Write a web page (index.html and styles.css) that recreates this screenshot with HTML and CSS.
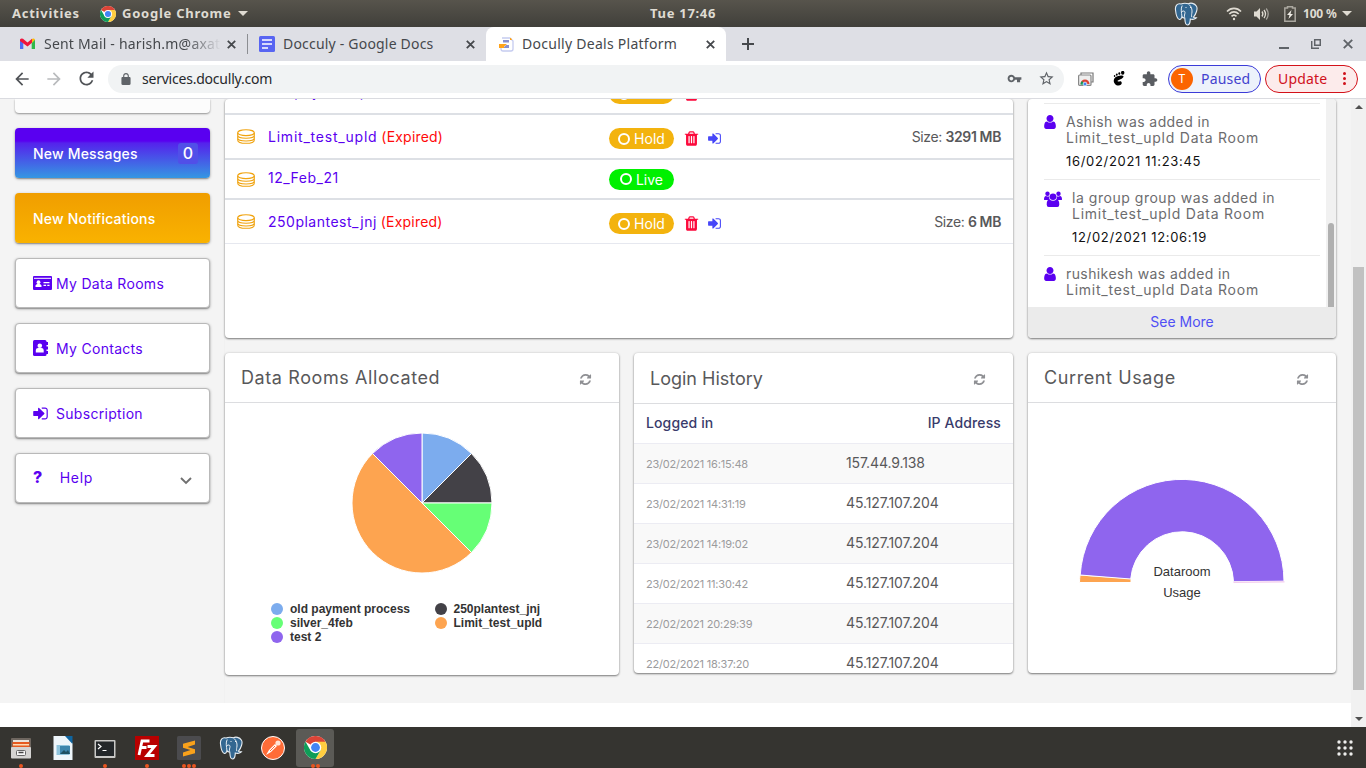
FILE: index.html
```html
<!DOCTYPE html>
<html lang="en">
<head>
<meta charset="utf-8">
<title>Docully Deals Platform</title>
<link rel="stylesheet" href="styles.css">
</head>
<body>
<svg class="defs" width="0" height="0" aria-hidden="true">
  <symbol id="chrome" viewBox="0 0 24 24">
    <circle cx="12" cy="12" r="12" fill="#fff"/>
    <path d="M12 12 1.600 6A12 12 0 0 1 22.400 6z" fill="#db4437"/>
    <path d="M22.400 6A12 12 0 0 1 12 24l5.200-9L12 6z" fill="#ffcd40"/>
    <path d="M1.600 6A12 12 0 0 0 12 24l5.200-9-5.200-3-5.200 3z" fill="#0f9d58"/>
    <circle cx="12" cy="12" r="6" fill="#fff"/>
    <circle cx="12" cy="12" r="4.600" fill="#4285f4"/>
  </symbol>
  <symbol id="elephant" viewBox="0 0 24 24">
    <path d="M7 2C3 1 1 4 1.500 8c.4 4 2 9 4 9.500 1.200.3 2-1.500 2.500-2.500 1 1 2.500 1 2.800 1.200.2 2 0 6.800 2.700 6.800 2.800 0 2.500-3 2.800-6 2 .8 5.200.4 6.200-1.200-1 0-2.500.2-3-.6 2.500-3 4.500-8.500 3-11C20.500 1 16.500.6 14.500 1.800 12 1 9 1.200 7 2z" fill="#336791" stroke="#e8eef3" stroke-width="1.100"/>
    <path d="M8.200 3.500C6.500 7 7.500 10 8 15M15 2.500c2.500 2 3.200 5 3 7.500-.2 2-.8 3-.2 5.200M8 9.500c1.500-1 3-.5 3 1 0 2-1.200 3-.3 5.200M11.500 5.500h1M16 5.500h1" fill="none" stroke="#e8eef3" stroke-width="1"/>
  </symbol>
  <symbol id="trash" viewBox="0 0 1792 1792"><path d="M704 1376v-704q0-14-9-23t-23-9h-64q-14 0-23 9t-9 23v704q0 14 9 23t23 9h64q14 0 23-9t9-23zm256 0v-704q0-14-9-23t-23-9h-64q-14 0-23 9t-9 23v704q0 14 9 23t23 9h64q14 0 23-9t9-23zm256 0v-704q0-14-9-23t-23-9h-64q-14 0-23 9t-9 23v704q0 14 9 23t23 9h64q14 0 23-9t9-23zm-544-992h448l-48-117q-7-9-17-11h-317q-10 2-17 11zm928 32v64q0 14-9 23t-23 9h-96v948q0 83-47 143.500t-113 60.500h-832q-66 0-113-58.500t-47-141.500v-952h-96q-14 0-23-9t-9-23v-64q0-14 9-23t23-9h309l70-167q15-37 54-63t79-26h320q40 0 79 26t54 63l70 167h309q14 0 23 9t9 23z"/></symbol>
  <symbol id="signin" viewBox="0 0 1792 1792"><path d="M1312 896q0 26-19 45l-544 544q-19 19-45 19t-45-19-19-45v-288h-448q-26 0-45-19t-19-45v-384q0-26 19-45t45-19h448v-288q0-26 19-45t45-19 45 19l544 544q19 19 19 45zm352-352v704q0 119-84.500 203.500t-203.500 84.500h-320q-13 0-22.500-9.500t-9.500-22.500q0-4-1-20t-.5-26.500 3-23.500 10-19.500 20.500-6.500h320q66 0 113-47t47-113v-704q0-66-47-113t-113-47h-312l-11.500-1-11.500-3-8-5.500-7-9-2-13.500q0-4-1-20t-.5-26.500 3-23.500 10-19.500 20.500-6.500h320q119 0 203.500 84.500t84.500 203.500z"/></symbol>
  <symbol id="refresh" viewBox="0 0 1792 1792"><path d="M1639 1056q0 5-1 7-64 268-268 434.500t-478 166.500q-146 0-282.500-55t-243.500-157l-129 129q-19 19-45 19t-45-19-19-45v-448q0-26 19-45t45-19h448q26 0 45 19t19 45-19 45l-137 137q71 66 161 102t187 36q134 0 250-65t186-179q11-17 53-117 8-23 30-23h192q13 0 22.500 9.500t9.500 22.500zm25-800v448q0 26-19 45t-45 19h-448q-26 0-45-19t-19-45 19-45l138-138q-148-137-349-137-134 0-250 65t-186 179q-11 17-53 117-8 23-30 23h-199q-13 0-22.500-9.500t-9.500-22.500v-7q65-268 270-434.500t480-166.500q146 0 284 55.500t245 156.500l130-129q19-19 45-19t45 19 19 45z"/></symbol>
  <symbol id="user" viewBox="256 128 1280 1536"><path d="M1536 1399q0 109-62.500 187t-150.500 78h-854q-88 0-150.500-78t-62.500-187q0-85 8.500-160.500t31.500-152 58.500-131 94-89 134.500-34.500q131 128 313 128t313-128q76 0 134.500 34.500t94 89 58.500 131 31.500 152 8.500 160.500zm-256-887q0 159-112.500 271.500t-271.500 112.500-271.500-112.500-112.500-271.500 112.500-271.500 271.500-112.500 271.500 112.500 112.500 271.500z"/></symbol>
  <symbol id="coins" viewBox="0 0 18 15">
    <g fill="none" stroke="#f0a30f" stroke-width="1.100"><ellipse cx="9" cy="3.700" rx="8.300" ry="2.900"/><path d="M.7 3.700v7.200C.7 15.400 17.300 15.400 17.300 10.900V3.700M.7 6.200C.7 10.200 17.300 10.200 17.300 6.200M.7 9C.7 13 17.300 13 17.300 9"/></g>
  </symbol>
</svg>

<header class="topbar">
  <span class="act">Activities</span>
  <svg class="tb-chrome" width="16" height="16"><use href="#chrome"/></svg>
  <span class="app">Google Chrome</span>
  <i class="tri"></i>
  <span class="clock">Tue 17:46</span>
  <div class="tray">
    <svg width="24" height="24"><use href="#elephant"/></svg>
    <svg class="wifi" width="16" height="14" viewBox="0 0 16 14" fill="none" stroke="#dfdbd2" stroke-width="1.700"><path d="M1 4.500C5 .3 11 .3 15 4.500M3.300 7c2.700-2.800 6.700-2.800 9.400 0M5.500 9.400c1.500-1.500 3.500-1.500 5 0"/><circle cx="8" cy="12" r="1.200" fill="#dfdbd2" stroke="none"/></svg>
    <svg class="vol" width="17" height="14" viewBox="0 0 17 14" fill="none" stroke="#dfdbd2" stroke-width="1.300"><path d="M1 4.500h2.500L7 1v12L3.500 9.500H1z" fill="#dfdbd2" stroke="none"/><path d="M9 4.500q1.800 2.500 0 5M11 3q3 4 0 8"/><path d="M13.200 1.500q4 5.500 0 11" stroke="#a5a29b"/></svg>
    <svg class="bat" width="12" height="16" viewBox="0 0 12 16"><path d="M3.500 2V.8h5V2h2.700v13.200H.8V2z" fill="none" stroke="#aaa79f" stroke-width="1.500"/><path d="M7.500 4 3 9h2.500l-1 4L9 8H6.500z" fill="#f0ede6"/></svg>
    <span class="pct">100 %</span>
    <i class="tri"></i>
  </div>
</header>

<nav class="tabs">
  <div class="tab mail">
    <svg width="15" height="12" viewBox="0 0 15 12"><path d="M0 1.500V11h3.300V5z" fill="#4f6bf5"/><path d="M15 1.500V11h-3.300V5z" fill="#2fb84b"/><path d="M15 1.500 11.700 5V1Q14 0 15 1.500z" fill="#fbbc04"/><path d="M0 1.500Q1 0 3 .7L7.500 4.500 12 .7V4.800L7.500 8.500 0 3z" fill="#f0143c"/></svg>
    <span class="t fade">Sent Mail - harish.m@axat</span>
    <svg class="x" width="9" height="9" viewBox="0 0 9 9"><path d="m.8.8 7.400 7.400m0-7.400L.8 8.200"/></svg>
  </div>
  <div class="tab docs">
    <svg width="16" height="16" viewBox="0 0 16 16"><rect width="16" height="16" rx="1.500" fill="#5865f2"/><path d="M3 4h10M3 8h10M3 12h6" stroke="#fff" stroke-width="1.700"/></svg>
    <span class="t">Docculy - Google Docs</span>
    <svg class="x" width="9" height="9" viewBox="0 0 9 9"><path d="m.8.8 7.400 7.400m0-7.400L.8 8.200"/></svg>
  </div>
  <div class="tab active">
    <svg width="15" height="15" viewBox="0 0 15 15"><path d="M3 1h8l3 3v8q0 2-2 2H4q-2 0-2-2V8" fill="#fff" stroke="#c5cbf0" stroke-width="1.300"/><path d="M4 3h6v2.500H4zM7 8h3v3H4z" fill="#8890cf"/><path d="M0 7h8l-3 2.500V11H0zM11 1h1l1 2h-2z" fill="#ffa31a"/></svg>
    <span class="t">Docully Deals Platform</span>
    <svg class="x" width="9" height="9" viewBox="0 0 9 9"><path d="m.8.8 7.400 7.400m0-7.400L.8 8.200"/></svg>
  </div>
  <svg class="plus" width="12" height="12" viewBox="0 0 12 12"><path d="M6 0v12M0 6h12" stroke="#45484c" stroke-width="2"/></svg>
  <div class="wctl">
    <svg width="10" height="10" viewBox="0 0 10 10"><path d="M0 9h10" stroke="#5f6368" stroke-width="2"/></svg>
    <svg width="10" height="10" viewBox="0 0 10 10" fill="none" stroke="#5f6368" stroke-width="1.500"><path d="M3.700.7h5.600v5.600H3.700zM.7 2v7.300H8"/></svg>
    <svg width="10" height="10" viewBox="0 0 10 10"><path d="m.8.8 8.400 8.400m0-8.400L.8 9.200" stroke="#5f6368" stroke-width="1.900"/></svg>
  </div>
</nav>

<div class="toolbar">
  <svg class="nav" width="20" height="20" viewBox="0 0 24 24" fill="#505357"><path d="M20 11H7.800l5.600-5.600L12 4l-8 8 8 8 1.400-1.400L7.800 13H20z"/></svg>
  <svg class="nav" width="20" height="20" viewBox="0 0 24 24" fill="#b9bbbd"><path d="M4 11h12.200l-5.600-5.600L12 4l8 8-8 8-1.400-1.400 5.600-5.600H4z"/></svg>
  <svg class="nav" width="21" height="21" viewBox="0 0 24 24" fill="#505357"><path d="M17.650 6.350C16.200 4.900 14.210 4 12 4c-4.420 0-7.990 3.580-7.990 8s3.570 8 7.990 8c3.730 0 6.840-2.550 7.730-6h-2.080c-.82 2.330-3.040 4-5.650 4-3.310 0-6-2.690-6-6s2.690-6 6-6c1.660 0 3.140.69 4.220 1.780L13 11h7V4l-2.350 2.350z"/></svg>
  <div class="omni">
    <svg width="12" height="12" viewBox="4 1 16 21" fill="#5f6368"><path fill-rule="evenodd" d="M18 8h-1V6c0-2.760-2.240-5-5-5S7 3.240 7 6v2H6c-1.100 0-2 .9-2 2v10c0 1.100.9 2 2 2h12c1.100 0 2-.9 2-2V10c0-1.100-.9-2-2-2zM9 6a3 3 0 0 1 6 0v2H9z"/></svg>
    <span class="url">services.docully.com</span>
    <svg class="key" width="15" height="15" viewBox="0 0 24 24" fill="#5f6368"><path d="M12.650 10C11.830 7.670 9.610 6 7 6c-3.310 0-6 2.690-6 6s2.690 6 6 6c2.610 0 4.830-1.670 5.650-4H16v4h5v-4h2v-4H12.650zM7 15c-1.700 0-3-1.300-3-3s1.300-3 3-3 3 1.300 3 3-1.300 3-3 3z"/></svg>
    <svg class="star" width="17" height="17" viewBox="0 0 24 24" fill="#5f6368"><path d="M22 9.240l-7.190-.62L12 2 9.190 8.630 2 9.240l5.460 4.730L5.820 21 12 17.270 18.180 21l-1.630-7.030L22 9.240zM12 15.400l-3.760 2.270 1-4.280-3.320-2.880 4.380-.38L12 6.100l1.710 4.040 4.380.38-3.320 2.880 1 4.280L12 15.400z"/></svg>
  </div>
  <svg class="ext1" width="16" height="14" viewBox="0 0 16 14"><path d="M3 3V1h12v9h-2" fill="none" stroke="#777" stroke-width="1.200"/><rect x=".6" y="3" width="12.400" height="10.400" rx="1" fill="#eee" stroke="#888" stroke-width="1.200"/><path d="M2.500 12a4.500 4.500 0 0 1 9 0L7 12z" fill="#db4437"/><path d="M2.500 12.500A4.500 4.500 0 0 1 4 9l3 4z" fill="#0f9d58"/><circle cx="7" cy="12" r="1.900" fill="#4285f4" stroke="#fff" stroke-width=".7"/></svg>
  <svg class="ext2" width="12" height="15" viewBox="0 0 12 15"><path d="M10.500 5.300C10 3.800 3.500 4.300 1.500 7.200c-2 3 .2 7.300 4 7.300 2.700 0 4.200-2.500 2.600-4-1.200-1-2.400.6-3.400-.2C3.500 9 10.800 8 10.500 5.300z"/><ellipse cx="9.700" cy="1.800" rx="1.700" ry="2"/><ellipse cx="6.300" cy="2.500" rx="1" ry="1.300"/><ellipse cx="3.800" cy="3.600" rx=".9" ry="1.200"/><ellipse cx="1.600" cy="5" rx=".8" ry="1"/></svg>
  <svg class="ext3" width="16" height="16" viewBox="1 1 23 22" fill="#5a5d62"><path d="M20.500 11H19V7c0-1.100-.9-2-2-2h-4V3.500C13 2.120 11.880 1 10.500 1S8 2.120 8 3.500V5H4c-1.100 0-1.990.9-1.990 2v3.800H3.500c1.490 0 2.700 1.210 2.700 2.700s-1.210 2.700-2.700 2.700H2V20c0 1.100.9 2 2 2h3.800v-1.500c0-1.490 1.210-2.700 2.700-2.700 1.490 0 2.700 1.210 2.700 2.700V22H17c1.100 0 2-.9 2-2v-4h1.500c1.380 0 2.500-1.120 2.500-2.500S21.880 11 20.500 11z"/></svg>
  <div class="paused"><b>T</b><span>Paused</span></div>
  <div class="update"><span>Update</span><svg width="3" height="13" viewBox="0 0 3 13" fill="#d0111b"><circle cx="1.500" cy="1.500" r="1.500"/><circle cx="1.500" cy="6.500" r="1.500"/><circle cx="1.500" cy="11.500" r="1.500"/></svg></div>
</div>

<div class="view">
  <div class="page">
    <aside class="side">
      <div class="profile"></div>
      <div class="btn msg"><span>New Messages</span><em>0</em></div>
      <div class="btn notif"><span>New Notifications</span></div>
      <div class="btn link"><svg width="19" height="14" viewBox="0 0 19 14"><path d="M1 0h17q1 0 1 1v12q0 1-1 1H1q-1 0-1-1V1q0-1 1-1z" fill="#5a00f0"/><path d="M1 2.300h17" stroke="#fff" stroke-width="1"/><path d="M2.500 11V9.500Q3 8 4.500 8h2Q8 8 8.500 9.500V11zM10.500 6h6v1.200h-6zM10.500 8.700h2.600v1.200h-2.600zm3.800 0h2.200v1.200h-2.200z" fill="#fff"/><circle cx="5.500" cy="6.200" r="1.900" fill="#fff"/></svg><span>My Data Rooms</span></div>
      <div class="btn link"><svg width="15" height="16" viewBox="0 0 15 16"><rect width="13.500" height="16" rx="1.500" fill="#5a00f0"/><path d="M13 2h2v3h-2zm0 4.500h2v3h-2zM13 11h2v3h-2z" fill="#5a00f0"/><path d="M2.800 12.500V10Q3 8 5 8h3.500q2 0 2.200 2v2.500z" fill="#fff"/><circle cx="6.800" cy="5.700" r="2.300" fill="#fff"/></svg><span>My Contacts</span></div>
      <div class="btn link"><svg class="sub" width="17" height="17" fill="#5a00f0"><use href="#signin"/></svg><span>Subscription</span></div>
      <div class="btn link help"><strong>?</strong><span>Help</span><svg width="12" height="8" viewBox="0 0 12 8"><path d="m1 1 5 5 5-5" fill="none" stroke="#707070" stroke-width="1.900"/></svg></div>
    </aside>
    <main class="main">
      <section class="card rooms">
        <div class="row first">
          <svg width="18" height="15"><use href="#coins"/></svg>
          <div class="name"><span>old payment process</span></div>
          <div class="pill hold"><i></i><span>Hold</span></div>
          <svg class="tr" width="17" height="17"><use href="#trash"/></svg><svg class="si" width="15" height="15"><use href="#signin"/></svg>
        </div>
        <div class="row">
          <svg width="18" height="15"><use href="#coins"/></svg>
          <div class="name"><span class="wide">Limit_test_upld</span> <span class="exp">(Expired)</span></div>
          <div class="pill hold"><i></i><span>Hold</span></div>
          <svg class="tr" width="17" height="17"><use href="#trash"/></svg><svg class="si" width="15" height="15"><use href="#signin"/></svg>
          <div class="size">Size: <b>3291 MB</b></div>
        </div>
        <div class="row live-row">
          <svg width="18" height="15"><use href="#coins"/></svg>
          <div class="name"><span>12_Feb_21</span></div>
          <div class="pill live"><i></i><span>Live</span></div>
        </div>
        <div class="row last">
          <svg width="18" height="15"><use href="#coins"/></svg>
          <div class="name"><span>250plantest_jnj</span> <span class="exp">(Expired)</span></div>
          <div class="pill hold"><i></i><span>Hold</span></div>
          <svg class="tr" width="17" height="17"><use href="#trash"/></svg><svg class="si" width="15" height="15"><use href="#signin"/></svg>
          <div class="size">Size: <b>6 MB</b></div>
        </div>
      </section>

      <section class="card activity">
        <div class="feed">
          <div class="items">
            <article><svg width="12" height="14" fill="#5a00f0"><use href="#user"/></svg><div><p><span>Ashish was added in</span><br><span class="wide">Limit_test_upld Data Room</span></p><time>16/02/2021 11:23:45</time></div></article>
            <article><svg width="18" height="16" viewBox="0 0 18 16" fill="#5a00f0"><circle cx="3.500" cy="2.700" r="2.200"/><circle cx="14.500" cy="2.700" r="2.200"/><path d="M0 8.500Q0 5 2 5q2 1 3.500.3-.6 2 .3 3.700H1Q0 9 0 8.500zM18 8.500Q18 5 16 5q-2 1-3.500.3.6 2-.3 3.700H17q1 0 1-.5z"/><circle cx="9" cy="5.700" r="3.300"/><path d="M2.700 13.500Q2.700 8.500 5.500 8.500q3.500 2.500 7 0 2.800 0 2.800 5 0 2.500-2 2.500H4.700q-2 0-2-2.500z"/></svg><div><p><span class="grp">la group group was added in</span><br><span class="wide">Limit_test_upld Data Room</span></p><time>12/02/2021 12:06:19</time></div></article>
            <article><svg width="12" height="14" fill="#5a00f0"><use href="#user"/></svg><div><p><span>rushikesh was added in</span><br><span class="wide">Limit_test_upld Data Room</span></p><time>12/02/2021 12:05:36</time></div></article>
          </div>
          <div class="feedbar"><i></i></div>
        </div>
        <div class="more"><span>See More</span></div>
      </section>

      <section class="card alloc">
        <h2><span class="spread">Data Rooms Allocated</span><svg width="13" height="13"><use href="#refresh"/></svg></h2>
        <svg class="pie" width="142" height="142" viewBox="-71 -71 142 142" stroke="#fff" stroke-width="1">
          <path d="M0 0V-70A70 70 0 0 1 49.500-49.500z" fill="#7cacee"/>
          <path d="M0 0 49.500-49.500A70 70 0 0 1 70 0z" fill="#434147"/>
          <path d="M0 0H70A70 70 0 0 1 49.500 49.500z" fill="#66ff76"/>
          <path d="M0 0 49.500 49.500A70 70 0 1 1-49.500-49.500z" fill="#fda450"/>
          <path d="M0 0-49.500-49.500A70 70 0 0 1 0-70z" fill="#8f65ee"/>
        </svg>
        <div class="legend">
          <div><i class="c1"></i><span>old payment process</span></div>
          <div><i class="c2"></i><span>250plantest_jnj</span></div>
          <div><i class="c3"></i><span>silver_4feb</span></div>
          <div><i class="c4"></i><span>Limit_test_upld</span></div>
          <div><i class="c5"></i><span>test 2</span></div>
        </div>
      </section>

      <section class="card logins">
        <h2><span>Login History</span><svg width="13" height="13"><use href="#refresh"/></svg></h2>
        <div class="th"><span>Logged in</span><span>IP Address</span></div>
        <div class="tr-row odd"><small>23/02/2021 16:15:48</small><span>157.44.9.138</span></div>
        <div class="tr-row"><small>23/02/2021 14:31:19</small><span>45.127.107.204</span></div>
        <div class="tr-row odd"><small>23/02/2021 14:19:02</small><span>45.127.107.204</span></div>
        <div class="tr-row"><small>23/02/2021 11:30:42</small><span>45.127.107.204</span></div>
        <div class="tr-row odd"><small>22/02/2021 20:29:39</small><span>45.127.107.204</span></div>
        <div class="tr-row"><small>22/02/2021 18:37:20</small><span>45.127.107.204</span></div>
      </section>

      <section class="card usage">
        <h2><span class="spread">Current Usage</span><svg width="13" height="13"><use href="#refresh"/></svg></h2>
        <div class="gauge">
          <svg width="208" height="104" viewBox="-104 -103 208 104">
            <path d="M-102.500.5A102 102 0 0 1-102-7L-51-3.500V.5z" fill="#fda450" stroke="#fff" stroke-width="1"/>
            <path d="M-101.800-7A102 102 0 0 1 102-.8L51.500-.3A51.500 51.500 0 0 0-51.300-3z" fill="#8f65ee" stroke="#fff" stroke-width="1"/>
            <path d="M51.500.3 102.500-.1" stroke="#f0c0e8" stroke-width="1"/>
          </svg>
          <p>Dataroom<br>Usage</p>
        </div>
      </section>
    </main>
  </div>
  <div class="scroll"><i class="up"></i><b></b><i class="down"></i></div>
</div>

<footer class="dock">
  <div class="app-i"><svg width="24" height="24" viewBox="0 0 24 24"><rect x="2" y="2" width="20" height="13" rx="1" fill="#6e665f"/><path d="M4 4h16v2H4z" fill="#e8e2da"/><path d="M3.500 6h17v6h-17z" fill="#e65a1f"/><path d="M4 8h16v1.500H4z" fill="#ffd9b0"/><rect x="2" y="11" width="20" height="11.500" rx="1" fill="#d4d3d1"/><rect x="7.500" y="14.500" width="9" height="5" rx="1" fill="#f7f7f7" stroke="#666"/><path d="M9.500 16.500h5" stroke="#444" stroke-width="1.500"/></svg><u><i></i></u></div>
  <div class="app-i"><svg width="24" height="24" viewBox="0 0 24 24"><path d="M2.500 0H15l6.500 7v17h-19z" fill="#eef6fb"/><path d="M14 0h7.500v8z" fill="#0f65a0"/><rect x="5.500" y="9" width="13" height="10" fill="#8fc4dd"/><rect x="9" y="10" width="10" height="8" fill="#3d86ad"/><path d="m9 18 4-4 2 2 2-2 2 4z" fill="#1d5062"/></svg></div>
  <div class="app-i"><svg width="24" height="24" viewBox="0 0 24 24"><rect x="1.500" y="4" width="21" height="18" rx="1" fill="#c9c9c7"/><rect x="3" y="5.500" width="18" height="14.500" fill="#23272a"/><path d="m5 8 3 2.500L5 13M9.500 14.500h4" fill="none" stroke="#fff" stroke-width="1.200"/></svg><u><i></i></u></div>
  <div class="app-i"><svg width="24" height="24" viewBox="0 0 24 24"><rect width="24" height="24" fill="#b80000"/><path d="M4 19 7 5h7.500M5.500 11.500h6M12.500 10.500h7l-7.500 9h7.500" fill="none" stroke="#fff" stroke-width="2.800"/></svg><u><i></i></u></div>
  <div class="app-i"><svg width="24" height="24" viewBox="0 0 24 24"><rect width="24" height="24" rx="1.500" fill="#4b4b4e"/><path d="M18 4.500v4L10.500 11l7.500 2.200v4L6 20.500v-4l7.500-2.500L6 11.700v-4z" fill="#f9a11b"/></svg><u><i></i><i></i><i></i></u></div>
  <div class="app-i"><svg width="24" height="24"><use href="#elephant"/></svg></div>
  <div class="app-i"><svg width="24" height="24" viewBox="0 0 24 24"><circle cx="12" cy="12" r="11.500" fill="#ff6c37" stroke="#fff" stroke-width="1"/><path d="m5 19 3-5 6-6 2 2-6 6z" fill="#fff"/><circle cx="17" cy="7" r="2.600" fill="#ffe4d6"/><path d="m9 15 5-5" stroke="#ff6c37"/></svg></div>
  <div class="app-i sel"><svg width="23" height="23"><use href="#chrome"/></svg><u><i></i><i></i></u></div>
  <svg class="grid" width="16" height="16" viewBox="0 0 16 16" fill="#eeeeec"><circle cx="2" cy="2" r="1.700"/><circle cx="8" cy="2" r="1.700"/><circle cx="14" cy="2" r="1.700"/><circle cx="2" cy="8" r="1.700"/><circle cx="8" cy="8" r="1.700"/><circle cx="14" cy="8" r="1.700"/><circle cx="2" cy="14" r="1.700"/><circle cx="8" cy="14" r="1.700"/><circle cx="14" cy="14" r="1.700"/></svg>
</footer>
</body>
</html>
```
FILE: styles.css
```css
* { box-sizing: border-box; }
body { margin: 0; width: 1366px; height: 768px; overflow: hidden; display: flex; flex-direction: column; font-family: Inter, "Open Sans", sans-serif; font-size: 14px; background: #fff; }
svg, .tri { flex: none; display: block; }
.defs { position: absolute; }
i, em { font-style: normal; }

/* desktop top bar */
.topbar { height: 27px; flex: none; display: flex; align-items: center; padding-left: 12px; background: linear-gradient(#57544c, #403f3a); color: #dfdbd2; font: bold 13px/27px "Noto Sans", sans-serif; letter-spacing: 0.75px; white-space: nowrap; }
.act { width: 88px; }
.tb-chrome { margin-right: 6px; }
.app { width: 116px; }
.tri { width: 0; height: 0; border: 5px solid transparent; border-top-color: #dfdbd2; border-bottom: 0; }
.clock { margin-left: 402px; width: 66px; letter-spacing: 0.7px; }
.tray { display: flex; align-items: center; margin-left: auto; padding-right: 14px; }
.wifi { margin-left: 28px; }
.vol { margin-left: 11px; }
.bat { margin-left: 14px; }
.pct { width: 34px; margin: 0 5px 0 7px; font-size: 12px; letter-spacing: -0.2px; }

/* browser tabs */
.tabs { height: 34px; flex: none; display: flex; align-items: center; background: #dedfe5; font: 14px/34px "Noto Sans", sans-serif; letter-spacing: 0.2px; color: #45484c; white-space: nowrap; }
.tab { display: flex; align-items: center; height: 34px; }
.x { stroke: #45484c; stroke-width: 1.8; margin-left: auto; }
.mail { width: 248px; padding: 0 11px 0 20px; height: 20px; border-right: 1px solid #8c8e92; }
.mail .t { margin-left: 9px; width: 177px; overflow: hidden; line-height: 20px; }
.fade { -webkit-mask-image: linear-gradient(90deg, #000 80%, transparent); mask-image: linear-gradient(90deg, #000 80%, transparent); }
.docs { width: 238px; padding: 0 11px 0 11px; }
.docs .t { margin-left: 8px; }
.active { width: 240px; padding: 0 11px 0 13px; background: #fff; border-radius: 8px 8px 0 0; letter-spacing: 0.27px; }
.active .t { margin-left: 8px; }
.plus { margin-left: 16px; }
.wctl { display: flex; gap: 22px; margin-left: auto; padding-right: 13px; }

/* browser toolbar */
.toolbar { height: 38px; flex: none; display: flex; align-items: center; padding: 0 8px 2px 12px; border-bottom: 1px solid #dadbe0; font: 14px/28px "Noto Sans", sans-serif; }
.nav { margin-right: 12px; }
.nav + .nav + .nav { margin-right: 11px; }
.omni { width: 956px; height: 28px; display: flex; align-items: center; border-radius: 14px; background: #f1f3f4; padding: 0 9px 0 12px; color: #27292c; }
.url { margin-left: 10px; letter-spacing: -0.22px; }
.key { margin-left: auto; margin-right: 16px; }
.ext1 { margin-left: 14px; }
.ext2 { margin-left: 19px; }
.ext3 { margin-left: 17px; }
.paused, .update { height: 28px; width: 93px; border: 1px solid #3c3cd8; border-radius: 14px; display: flex; align-items: center; line-height: 26px; letter-spacing: 0.2px; }
.paused { margin-left: 10px; padding-left: 2px; background: #edf2fb; color: #4242cf; }
.paused b { width: 22px; height: 22px; border-radius: 50%; background: #fb6400; color: #fff; font-weight: normal; font-size: 12px; line-height: 22px; text-align: center; margin-right: 8px; }
.update { margin-left: 4px; border-color: #d31119; background: #fcebeb; color: #d0111b; padding: 0 11px 0 12px; justify-content: space-between; }

/* web page viewport */
.view { flex: 1; min-height: 0; display: flex; overflow: hidden; }
.page { width: 1351px; height: 604px; background: #f4f4f4; display: flex; overflow: hidden; }
.side { width: 225px; flex: none; padding: 0 14px 0 15px; display: flex; flex-direction: column; gap: 15px; border-right: 1px solid #f1f1f1; }
.profile { height: 14px; background: #fcfcfc; border-radius: 0 0 4px 4px; box-shadow: 0 1px 2px #0006; flex: none; }
.btn { height: 50px; flex: none; display: flex; align-items: center; padding: 0 18px; border-radius: 4px; box-shadow: 0 1px 3px #0005, 0 1px 1px #0003; font-weight: 500; letter-spacing: 0.2px; color: #fff; white-space: nowrap; }
.msg { background: linear-gradient(#5900f0 26%, #5522ec 30%, #3597e2); justify-content: space-between; padding-right: 12px; }
.msg em { width: 20px; height: 21px; border-radius: 3px; background: #514fe8; text-align: center; font-size: 16px; line-height: 21px; }
.notif { background: linear-gradient(#f09e00, #f9b200); }
.link { background: #fff; border: 1px solid #b9b9b9; color: #5a00f0; font-weight: 400; letter-spacing: 0.3px; padding: 0 17px; }
.link span { margin-left: auto; width: 136px; }
.sub { margin-left: -1px; }
.help strong { font-size: 16px; font-weight: 800; width: 10px; padding-bottom: 2px; }
.help span { margin-left: 17px; width: 122px; letter-spacing: 0.7px; padding-bottom: 2px; }
.help svg { margin: 6px 0 0 1px; }

.main { display: grid; grid-template-columns: 394px 379px 308px; grid-template-rows: 239px 322px; gap: 15px; align-items: start; }
.card { background: #fff; border-radius: 4px; box-shadow: 0 1px 2px #0007, 0 0 3px #0002; overflow: hidden; color: #58585a; }

/* data room list */
.rooms { grid-column: 1 / 3; width: 788px; height: 239px; }
.row { height: 45px; border-bottom: 2px solid #dde0e5; display: flex; align-items: center; padding: 0 12px; white-space: nowrap; }
.first { margin-top: -29px; }
.live-row { height: 40px; }
.last { height: 44px; border-bottom: 1px solid #e6e8ef; }
.name { margin-left: 13px; width: 341px; color: #5a00f0; letter-spacing: 0.5px; padding-bottom: 1px; }
.live-row .name { padding-bottom: 3px; }
.wide { letter-spacing: 0.78px; }
.exp { color: #ff0a0a; letter-spacing: 0.2px; margin-left: -0.5px; }
.pill { width: 65px; height: 21px; border-radius: 10.5px; display: flex; align-items: center; justify-content: center; gap: 4px; color: #fff; margin-top: 4px; }
.live-row .pill { margin-top: 0; }
.pill i { width: 12px; height: 12px; border: 2px solid #fff; border-radius: 50%; }
.hold { background: #f3b30e; }
.live { background: #00f000; }
.tr { fill: #fc0a3c; margin: 3px 0 0 9px; }
.si { fill: #4646f8; margin: 3px 0 0 7px; }
.size { margin-left: auto; letter-spacing: -0.38px; padding-bottom: 1px; }
.size b { font-weight: 600; }

/* recent activity */
.activity { height: 239px; display: flex; flex-direction: column; }
.feed { height: 208px; display: flex; overflow: hidden; }
.items { width: 298px; padding: 4px 6px 0 16px; }
.items article { height: 76px; display: flex; gap: 10px; padding-top: 10px; border-top: 1px solid #eaeaea; }
.items article svg { margin-top: 1px; }
.items p { margin: 0; line-height: 16px; color: #6c6c6e; letter-spacing: 0.4px; white-space: nowrap; }
.items .wide { letter-spacing: 0.76px; }
.grp { letter-spacing: 0.53px; }
.items time { display: block; margin-top: 7px; line-height: 16px; font-size: 13px; letter-spacing: 0.68px; color: #111; white-space: nowrap; }
.feedbar { width: 10px; background: #f1f1f1; padding: 124px 2px 0; }
.feedbar i { display: block; height: 90px; border-radius: 3px; background: #b0b0b0; }
.more { flex: 1; background: #ebebeb; text-align: center; line-height: 30px; color: #4f4ff5; }

h2 { margin: 0; height: 50px; display: flex; align-items: center; justify-content: space-between; padding: 0 27px 0 16px; border-bottom: 1px solid #dcdde0; font-size: 18px; font-weight: 400; white-space: nowrap; }
.spread { letter-spacing: 0.6px; }
h2 svg { fill: #8f9094; margin-top: 3px; }
.alloc { height: 322px; }
.pie { margin: 29px 0 0 126px; }
.legend { display: grid; grid-template-columns: 163.5px auto; grid-auto-rows: 14px; margin: 28px 0 0 46px; font: bold 12px/14px "Liberation Sans", sans-serif; color: #333; }
.legend div { display: flex; align-items: center; gap: 7px; }
.legend i { width: 12px; height: 12px; border-radius: 50%; margin-bottom: 1px; }
.c1 { background: #7cacee; } .c2 { background: #434147; } .c3 { background: #66ff76; } .c4 { background: #fda450; } .c5 { background: #8f65ee; }

.logins { height: 320px; }
.logins h2 { height: 51px; }
.th, .tr-row { height: 40px; border-bottom: 1px solid #ececf3; display: flex; align-items: center; padding: 0 12px 2px; }
.th { justify-content: space-between; color: #393b6b; font-weight: 500; letter-spacing: 0.12px; }
.odd { background: #f9f9f9; }
.tr-row { letter-spacing: -0.1px; }
.tr-row small { width: 200px; font-size: 11px; letter-spacing: -0.2px; color: #9b9b9d; padding-top: 2px; white-space: nowrap; }

.usage { height: 320px; }
.gauge { padding: 76px 0 0 50px; width: 258px; }
.gauge p { margin: -22px 0 0; text-align: center; font: 13px/21px "Liberation Sans", sans-serif; color: #333; }

.scroll { width: 15px; background: #f1f1f1; display: flex; flex-direction: column; align-items: center; }
.scroll b { width: 11px; height: 423px; background: #c1c1c1; margin: 158px 0 27px; }
.scroll i { border: 4px solid transparent; }
.scroll .up { border-bottom-color: #505050; border-top: 0; margin-top: 6px; }
.scroll .down { border-top-color: #505050; border-bottom: 0; }

/* dock */
.dock { height: 41px; flex: none; background: #353430; display: flex; align-items: center; }
.app-i { width: 38px; height: 38px; margin-left: 4px; border-radius: 3px; display: grid; place-items: center; position: relative; }
.app-i:first-child { margin-left: 2px; }
.sel { background: #5b5a56; }
.app-i u { position: absolute; bottom: -1px; left: 0; right: 0; display: flex; justify-content: center; gap: 1px; }
.app-i u i { width: 4px; height: 4px; border-radius: 50%; background: #e95420; }
.grid { margin-left: auto; margin-right: 13px; }
```
